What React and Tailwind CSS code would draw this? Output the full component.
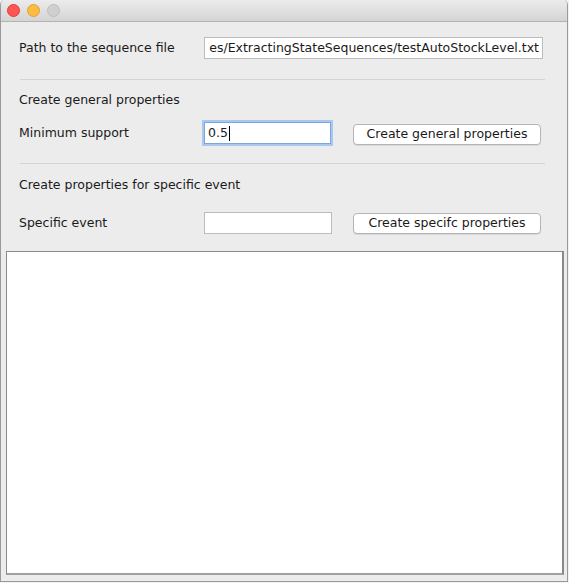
export default function App() {
  const font = { fontFamily: '"DejaVu Sans", "Noto Sans", sans-serif' };
  return (
    <div className="w-[569px] h-[583px] bg-[#f2f2f2] overflow-hidden" style={font}>
      <div className="w-[568px] h-[582px] flex flex-col rounded-t-[5px] overflow-hidden border-b border-r border-l border-[#9a9a9a] bg-[#ececec]">
        {/* Title bar */}
        <div className="h-[22px] shrink-0 flex items-center gap-[7px] pl-[6px] bg-gradient-to-b from-[#ececec] to-[#d4d4d4] border-b border-[#b3b3b3]">
          <div className="w-[13px] h-[13px] rounded-full bg-[#fc5753] border border-[#df3d39]" />
          <div className="w-[13px] h-[13px] rounded-full bg-[#fdbc40] border border-[#dea034]" />
          <div className="w-[13px] h-[13px] rounded-full bg-[#cfcfcf] border border-[#bdbdbd]" />
        </div>

        {/* Content */}
        <div className="flex flex-col flex-1 text-[12.5px] text-[#1a1a1a]">
          {/* Row 1 */}
          <div className="mt-[15px] h-[22px] flex items-center">
            <div className="w-[203px] pl-[18px] shrink-0">Path to the sequence file</div>
            <div className="w-[339px] h-[22px] bg-white border border-[#bcbcbc] flex items-center justify-end overflow-hidden whitespace-nowrap pr-[3px]">
              es/ExtractingStateSequences/testAutoStockLevel.txt
            </div>
          </div>

          <div className="mt-[20px] ml-[19px] w-[525px] h-px bg-[#d3d3d3]" />

          <div className="mt-[12px] h-[16px] pl-[18px] flex items-center">Create general properties</div>

          {/* Row 2 */}
          <div className="mt-[14px] h-[23px] flex items-center">
            <div className="w-[203px] pl-[18px] shrink-0">Minimum support</div>
            <div className="w-[127px] h-[22px] self-start bg-white border border-[#7fa6dc] shadow-[0_0_0_2px_#a9c8f0] flex items-center pl-[3px]">
              0.5<span className="inline-block w-px h-[15px] bg-black ml-px" />
            </div>
            <div className="ml-[22px] w-[188px] h-[21px] self-end bg-white border border-[#b4b4b4] rounded-[4px] shadow-[0_1px_0_rgba(0,0,0,0.08)] flex items-center justify-center">
              Create general properties
            </div>
          </div>

          <div className="mt-[18px] ml-[19px] w-[525px] h-px bg-[#d3d3d3]" />

          <div className="mt-[13px] h-[16px] pl-[18px] flex items-center">Create properties for specific event</div>

          {/* Row 3 */}
          <div className="mt-[19px] h-[22px] flex items-center">
            <div className="w-[203px] pl-[18px] shrink-0">Specific event</div>
            <div className="w-[128px] h-[22px] bg-white border border-[#bcbcbc]" />
            <div className="ml-[21px] w-[188px] h-[21px] self-end bg-white border border-[#b4b4b4] rounded-[4px] shadow-[0_1px_0_rgba(0,0,0,0.08)] flex items-center justify-center">
              Create specifc properties
            </div>
          </div>

          {/* Text area */}
          <div className="mt-[17px] ml-[5px] w-[558px] h-[324px] bg-white border border-[#8a8a8a] border-b-2 border-r-2 border-b-[#a0a0a0] border-r-[#8a8a8a]" />
        </div>
      </div>
    </div>
  );
}
